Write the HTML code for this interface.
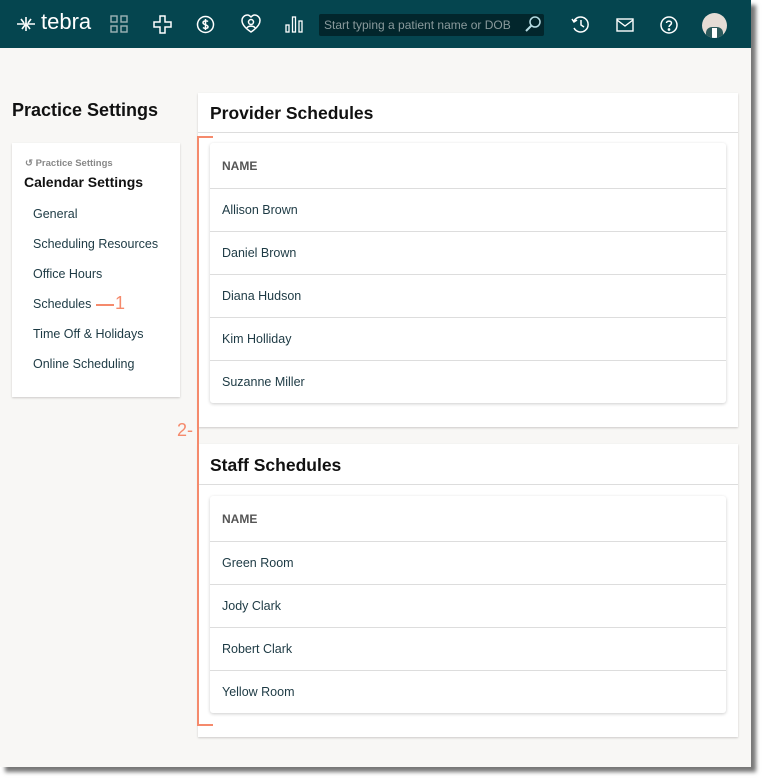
<!DOCTYPE html>
<html><head><meta charset="utf-8">
<style>
*{margin:0;padding:0;box-sizing:border-box}
body{width:765px;height:780px;background:#fff;font-family:"Liberation Sans",sans-serif;position:relative;overflow:hidden}
#page{position:absolute;left:0;top:0;width:751px;height:767px;background:#f8f7f5;box-shadow:5px 5px 4px #777}
#hdr{position:absolute;left:0;top:0;width:751px;height:48px;background:#05454f}
.ic{position:absolute;top:13px}
#search{position:absolute;left:319px;top:14px;width:225px;height:22px;background:#02262c;border-radius:2px;color:#8a9a9c;font-size:12px;line-height:22px;padding-left:5px}
.card{position:absolute;background:#fff;box-shadow:0 1px 2px rgba(0,0,0,.18)}
h1{position:absolute;left:12px;top:100px;font-size:18px;font-weight:bold;color:#111}
.nav{position:absolute;left:33px;font-size:12.5px;color:#1d3a44}
.title{position:absolute;left:12px;font-size:17.5px;font-weight:bold;color:#111}
.tbl{position:absolute;left:12px;width:516px;background:#fff;border-radius:3px;box-shadow:0 1px 3px rgba(0,0,0,.2)}
.row{height:43px;border-top:1px solid #ddd;font-size:12.5px;color:#1d3a44;line-height:43px;padding-left:12px}
.row.h{border-top:none;height:45px;line-height:46px;font-weight:bold;color:#555;font-size:12px}
.or{position:absolute;background:#f58a6c}
</style></head><body>
<div id="page">
<div id="hdr">
 <svg class="ic" style="left:16px;top:14px" width="20" height="20" viewBox="0 0 20 20" stroke="#fff" stroke-width="1.6" fill="none"><path d="M1 10H19M10 3V17M5 5L8 9M15 5L12 9M6 15L9 11M14 15L11 11"/></svg>
 <div style="position:absolute;left:41px;top:9px;color:#fff;font-size:22px">tebra</div>
 <svg class="ic" style="left:110px;top:15px" width="18" height="18" viewBox="0 0 18 18" stroke="#9fb3b6" stroke-width="1.4" fill="none"><rect x="1" y="1" width="6" height="6"/><rect x="11" y="1" width="6" height="6"/><rect x="1" y="11" width="6" height="6"/><rect x="11" y="11" width="6" height="6"/></svg>
 <svg class="ic" style="left:153px;top:15px" width="19" height="19" viewBox="0 0 19 19" stroke="#fff" stroke-width="1.5" fill="none"><path d="M7 1H12V7H18V12H12V18H7V12H1V7H7Z"/></svg>
 <svg class="ic" style="left:196px;top:15px" width="19" height="19" viewBox="0 0 19 19" stroke="#fff" stroke-width="1.5" fill="none"><circle cx="9.5" cy="9.5" r="8"/><path d="M12 6.5C11 5.5 7 5.5 7 7.8S12 9.5 12 11.8 8 13.5 7 12.5M9.5 4V15"/></svg>
 <svg class="ic" style="left:241px;top:14px" width="20" height="20" viewBox="0 0 20 20" stroke="#fff" stroke-width="1.5" fill="none"><path d="M10 18C4 14 1 10 1 6.5 1 3 4 1 6.5 1 8 1 9 2 10 3 11 2 12 1 13.5 1 16 1 19 3 19 6.5 19 10 16 14 10 18Z"/><circle cx="10" cy="8" r="2.5"/><path d="M6 14C7 11.5 13 11.5 14 14"/></svg>
 <svg class="ic" style="left:285px;top:15px" width="18" height="18" viewBox="0 0 18 18" stroke="#fff" stroke-width="1.3" fill="none"><rect x="1" y="10" width="3" height="7"/><rect x="7.5" y="2" width="3" height="15"/><rect x="14" y="6" width="3" height="11"/></svg>
 <div id="search">Start typing a patient name or DOB</div>
 <svg class="ic" style="left:524px;top:15px" width="18" height="18" viewBox="0 0 18 18" fill="none"><circle cx="11" cy="7" r="5" stroke="#b5dbe2" stroke-width="1.5"/><path d="M7.5 10.5L2 16" stroke="#b5dbe2" stroke-width="2"/></svg>
 <svg class="ic" style="left:571px;top:15px" width="19" height="19" viewBox="0 0 19 19" stroke="#fff" stroke-width="1.5" fill="none"><path d="M3 6A7.5 7.5 0 1 1 3 13M1 4L3 7 6 5M10 5V10L13 12"/></svg>
 <svg class="ic" style="left:616px;top:18px" width="18" height="14" viewBox="0 0 18 14" stroke="#fff" stroke-width="1.4" fill="none"><rect x="1" y="1" width="16" height="12"/><path d="M1 2L9 8 17 2"/></svg>
 <svg class="ic" style="left:660px;top:16px" width="18" height="18" viewBox="0 0 18 18" stroke="#fff" stroke-width="1.5" fill="none"><circle cx="9" cy="9" r="8"/><path d="M6.5 7C6.5 4.5 11.5 4.5 11.5 7 11.5 9 9 9 9 11"/><circle cx="9" cy="13.5" r=".6" fill="#fff"/></svg>
 <div style="position:absolute;left:702px;top:13px;width:25px;height:25px;border-radius:50%;background:#e5dcd5;overflow:hidden"><div style="position:absolute;left:4px;top:14px;width:17px;height:12px;background:#2c5a5c;border-radius:6px 6px 0 0"></div><div style="position:absolute;left:10px;top:15px;width:5px;height:10px;background:#fff"></div></div>
</div>

<h1>Practice Settings</h1>
<div class="card" style="left:12px;top:143px;width:168px;height:254px">
 <div style="position:absolute;left:13px;top:15px;font-size:9.5px;color:#888;font-weight:bold">↺ Practice Settings</div>
 <div style="position:absolute;left:12px;top:31px;font-size:14px;font-weight:bold;color:#111">Calendar Settings</div>
</div>
<div class="nav" style="top:207px">General</div>
<div class="nav" style="top:237px">Scheduling Resources</div>
<div class="nav" style="top:267px">Office Hours</div>
<div class="nav" style="top:297px">Schedules</div>
<div class="nav" style="top:327px">Time Off &amp; Holidays</div>
<div class="nav" style="top:357px">Online Scheduling</div>
<div class="or" style="left:96px;top:304px;width:18px;height:2px"></div>
<div style="position:absolute;left:115px;top:293px;color:#f58a6c;font-size:18px">1</div>

<div class="card" style="left:198px;top:93px;width:540px;height:334px">
 <div class="title" style="top:10px">Provider Schedules</div>
 <div style="position:absolute;left:0;top:39px;width:540px;border-top:1px solid #ddd"></div>
 <div class="tbl" style="top:50px">
  <div class="row h">NAME</div>
  <div class="row">Allison Brown</div>
  <div class="row">Daniel Brown</div>
  <div class="row">Diana Hudson</div>
  <div class="row">Kim Holliday</div>
  <div class="row">Suzanne Miller</div>
 </div>
</div>
<div class="card" style="left:198px;top:444px;width:540px;height:293px">
 <div class="title" style="top:11px">Staff Schedules</div>
 <div style="position:absolute;left:0;top:40px;width:540px;border-top:1px solid #ddd"></div>
 <div class="tbl" style="top:52px">
  <div class="row h">NAME</div>
  <div class="row">Green Room</div>
  <div class="row">Jody Clark</div>
  <div class="row">Robert Clark</div>
  <div class="row">Yellow Room</div>
 </div>
</div>
<div class="or" style="left:197px;top:136px;width:2px;height:590px"></div>
<div class="or" style="left:197px;top:136px;width:16px;height:2px"></div>
<div class="or" style="left:197px;top:724px;width:16px;height:2px"></div>
<div style="position:absolute;left:177px;top:420px;color:#f58a6c;font-size:18px">2-</div>
</div>
</body></html>
